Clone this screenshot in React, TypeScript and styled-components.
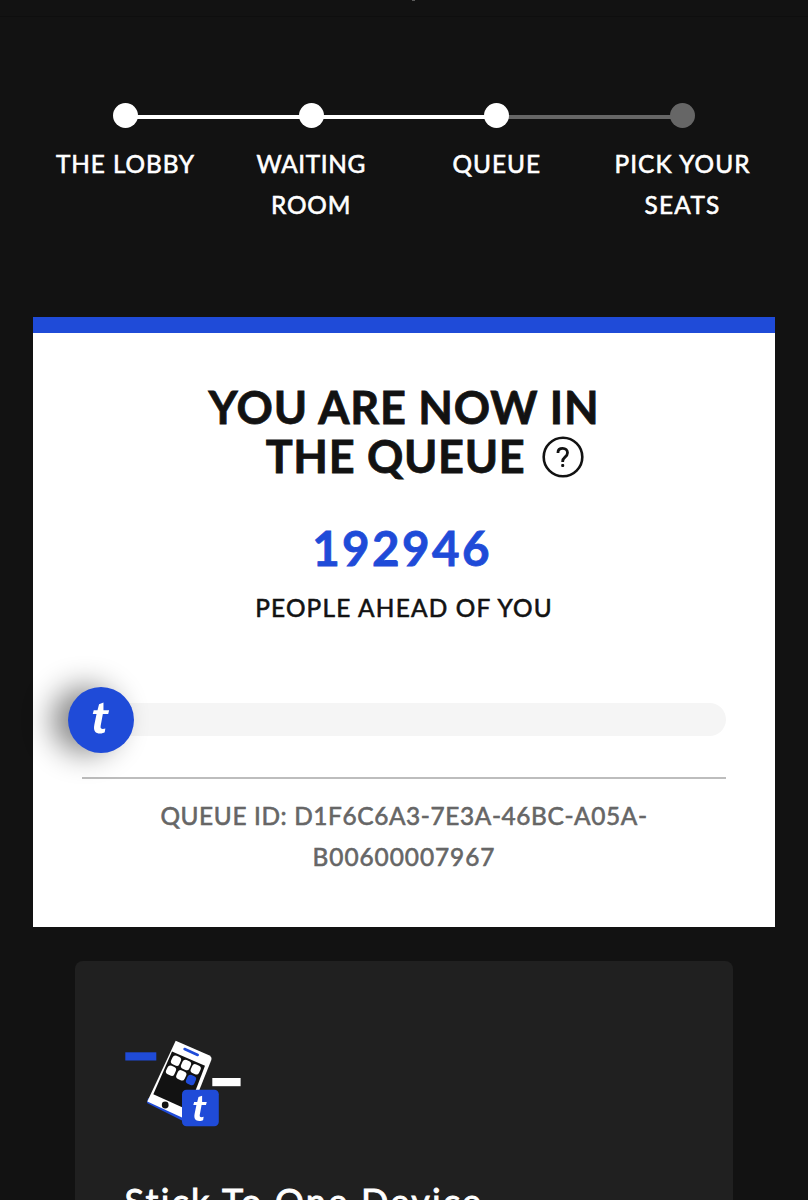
import React from "react";
import styled, { createGlobalStyle } from "styled-components";

const BLUE = "#1f4bd8";
const INK = "#121212";

const GlobalStyle = createGlobalStyle`
  * { box-sizing: border-box; }
  html, body { margin: 0; height: 1200px; overflow: hidden; background: ${INK}; }
  body { font-family: Lato, "Liberation Sans", sans-serif; }
`;

const Page = styled.main`
  height: 1200px;
  overflow: hidden;
  background: ${INK};
  padding: 0 33px;
`;

const Header = styled.header`
  display: flex;
  justify-content: center;
  height: 17px;
  margin: 0 -33px;
  padding-left: 18px;
  border-bottom: 1px solid #0e0e0e;

  &::before {
    content: "";
    width: 3px;
    height: 1px;
    background: #5a5a5a;
  }
`;

const Steps = styled.ol`
  list-style: none;
  display: grid;
  grid-template-columns: repeat(4, 185.7px);
  width: 742px;
  height: 300px;
  margin: 0 0 0 -0.4px;
  padding: 85px 0 0;
`;

const Step = styled.li`
  display: flex;
  flex-direction: column;
  align-items: center;
`;

const Marker = styled.div`
  display: grid;
  grid-template-columns: 1fr 25px 1fr;
  align-items: center;
  width: 100%;
  height: 26px;
  margin-bottom: 15px;
`;

const Dot = styled.span<{ $on: boolean }>`
  width: 25px;
  height: 25px;
  border-radius: 50%;
  background: ${(p) => (p.$on ? "#fff" : "#666")};
  z-index: 1;
`;

const Rail = styled.span<{ $tone: string }>`
  height: 4px;
  margin: 4px -2px 0;
  background: ${(p) => p.$tone};
`;

const Line = styled.span<{ $track: number }>`
  display: block;
  white-space: nowrap;
  letter-spacing: ${(p) => p.$track}px;
`;

const Label = styled.div`
  color: #fff;
  font-size: 24.4px;
  line-height: 41px;
  text-align: center;
  -webkit-text-stroke: 0.6px currentColor;
`;

const Card = styled.section`
  width: 742px;
  height: 610px;
  border-top: 16px solid ${BLUE};
  background: #fff;
  padding: 50px 49px 0;
  text-align: center;
  color: ${INK};
`;

const Title = styled.h1`
  margin: 0;
  font-size: 45px;
  font-weight: 700;
  line-height: 49.5px;
  -webkit-text-stroke: 0.8px currentColor;
`;

const TitleRow = styled.div`
  display: flex;
  justify-content: center;
  align-items: center;
  gap: 17px;
  height: 49px;
  padding-left: 42px;
`;

const Count = styled.div`
  margin: 26px 4px 0 0;
  color: ${BLUE};
  font-size: 47.5px;
  font-weight: 700;
  line-height: 80px;
  -webkit-text-stroke: 0.8px currentColor;
`;

const Caption = styled.div`
  margin-top: -1px;
  font-size: 24.4px;
  line-height: 41px;
  -webkit-text-stroke: 0.6px currentColor;
`;

const Progress = styled.div`
  display: flex;
  align-items: center;
  height: 66px;
  margin: 59px 0 24px -14px;
`;

const Thumb = styled.div`
  width: 66px;
  height: 66px;
  flex: none;
  border-radius: 50%;
  background: ${BLUE};
  box-shadow: -16px 0 30px rgba(0, 0, 0, 0.48);
  z-index: 1;
`;

const Track = styled.div`
  flex: 1;
  height: 33px;
  margin-left: -33px;
  border-radius: 17px;
  background: #f5f5f5;
`;

const QueueId = styled.div`
  border-top: 2px solid #bdbdbd;
  padding-top: 16px;
  color: #666;
  font-size: 24.4px;
  line-height: 41px;
  -webkit-text-stroke: 0.6px currentColor;
`;

const Tip = styled.section`
  width: 658px;
  height: 260px;
  margin: 34px 0 0 42px;
  border-radius: 8px;
  background: #202020;
  padding: 75px 49.5px 0;
`;

const TipTitle = styled.h2`
  margin: 48px 0 0;
  color: #fff;
  font-size: 36px;
  font-weight: 400;
  line-height: 50px;
  -webkit-text-stroke: 0.9px currentColor;
`;

const Art = styled.svg`
  display: block;
  margin-left: -1px;
`;

const T_PATH =
  "M38 0 L24 5 L19 24 H7 L4 36 H16 L9 70 C5 90 13 98 27 98 C34 98 39 96 42 94 L44 82 C35 85 27 84 29 74 L36 36 H53 L56 24 H38 Z";

const HelpIcon = () => (
  <svg width="42" height="42" viewBox="0 0 42 42" fill="none" stroke={INK}>
    <circle cx="21" cy="21" r="19.3" strokeWidth="2.6" />
    <path
      d="M16 17V16.300C16 13.800 18 12.300 20.700 12.300C23.500 12.300 25.500 14 25.500 16.700C25.500 18.800 24.400 19.900 23 21.100C21.500 22.400 20.700 23.200 20.700 25.200V26"
      strokeWidth="2.800"
    />
    <rect x="19.200" y="28" width="3" height="3" rx="1" fill={INK} stroke="none" />
  </svg>
);

const ThumbLogo = () => (
  <svg width="66" height="66" viewBox="0 0 66 66">
    <path transform="translate(23.500 15.600) scale(.315)" d={T_PATH} fill="#fff" />
  </svg>
);

const appTiles = [
  { x: 176, y: 1060.7, fill: "#fff" },
  { x: 186, y: 1065, fill: "#fff" },
  { x: 195.7, y: 1069.3, fill: "#fff" },
  { x: 171, y: 1070.7, fill: "#fff" },
  { x: 181.3, y: 1075.3, fill: "#fff" },
  { x: 191, y: 1080, fill: BLUE },
];

const DeviceArt = () => (
  <Art width="118" height="92" viewBox="124 1036 118 92">
    <rect x="125.300" y="1052.300" width="31" height="8.200" fill={BLUE} />
    <rect x="212.300" y="1078" width="28.300" height="8.200" fill="#fff" />
    <path d="M147 1103 L182 1120.500 L184 1117 L148 1098Z" fill={BLUE} />
    <path d="M175.700 1040.700 L209 1055.300 Q212.300 1057 211.300 1060 L190 1113.500 L182 1117.500 L147.300 1101.500Z" fill="#fff" />
    <path d="M172 1051.500 L205 1065.800 L195 1092 L186 1109 L153.300 1094.200Z" fill={INK} />
    <path d="M184.600 1049 L197.700 1055" stroke={BLUE} strokeWidth="2.600" strokeLinecap="round" />
    {appTiles.map((t) => (
      <rect
        key={t.x}
        x={t.x - 4.5}
        y={t.y - 4.7}
        width="9"
        height="9.400"
        rx="3"
        fill={t.fill}
        transform={`rotate(25 ${t.x} ${t.y})`}
      />
    ))}
    <circle cx="165.200" cy="1105" r="3.400" fill={INK} />
    <rect x="182" y="1089.700" width="36.800" height="36.600" rx="4.500" fill={BLUE} />
    <path transform="translate(192.300 1095.700) scale(.258)" d={T_PATH} fill="#fff" />
  </Art>
);

const steps = [
  { lines: ["THE LOBBY"], on: true, left: "transparent", right: "#fff", track: [0.9] },
  { lines: ["WAITING", "ROOM"], on: true, left: "#fff", right: "#fff", track: [0.6, 0.9] },
  { lines: ["QUEUE"], on: true, left: "#fff", right: "#666", track: [1] },
  { lines: ["PICK YOUR", "SEATS"], on: false, left: "#666", right: "transparent", track: [1.1, 1.3] },
];

export default function App() {
  return (
    <>
      <GlobalStyle />
      <Page>
        <Header />
        <Steps>
          {steps.map((s) => (
            <Step key={s.lines[0]}>
              <Marker>
                <Rail $tone={s.left} />
                <Dot $on={s.on} />
                <Rail $tone={s.right} />
              </Marker>
              <Label>
                {s.lines.map((l, i) => (
                  <Line key={l} $track={s.track[i]}>{l}</Line>
                ))}
              </Label>
            </Step>
          ))}
        </Steps>
        <Card>
          <Title>
            <Line $track={0.8}>YOU ARE NOW IN</Line>
            <TitleRow>
              <Line $track={0.7}>THE QUEUE</Line>
              <HelpIcon />
            </TitleRow>
          </Title>
          <Count>
            <Line $track={2.4}>192946</Line>
          </Count>
          <Caption>
            <Line $track={1.2}>PEOPLE AHEAD OF YOU</Line>
          </Caption>
          <Progress>
            <Thumb>
              <ThumbLogo />
            </Thumb>
            <Track />
          </Progress>
          <QueueId>
            <Line $track={0.62}>QUEUE ID: D1F6C6A3-7E3A-46BC-A05A-</Line>
            <Line $track={0.95}>B00600007967</Line>
          </QueueId>
        </Card>
        <Tip>
          <DeviceArt />
          <TipTitle>
            <Line $track={2.25}>Stick To One Device</Line>
          </TipTitle>
        </Tip>
      </Page>
    </>
  );
}
